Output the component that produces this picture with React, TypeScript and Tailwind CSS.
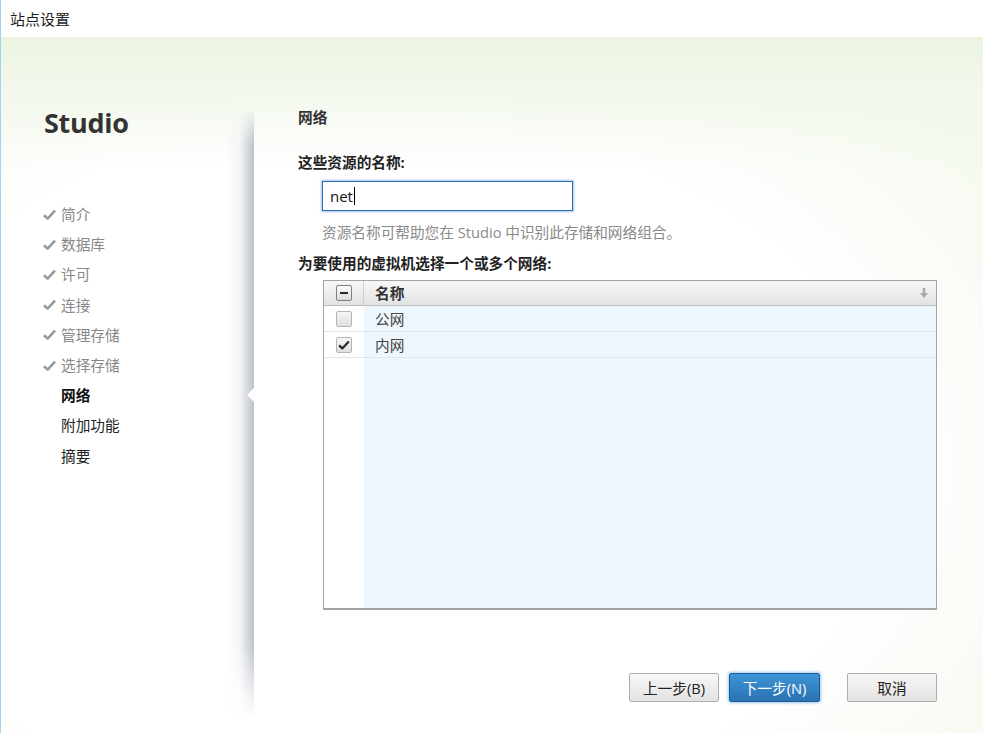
import React from "react";

const Check = ({ className = "" }: { className?: string }) => (
  <svg width="13" height="11" viewBox="0 0 13 11" className={className}>
    <path d="M1 6.2 L4.6 9.6 L12 1.6" fill="none" stroke="currentColor" strokeWidth="2.6" strokeLinejoin="round" />
  </svg>
);

const navDone = ["简介", "数据库", "许可", "连接", "管理存储", "选择存储"];

function Box({ state }: { state: "none" | "checked" | "mixed" }) {
  return (
    <div
      className={
        "w-[16px] h-[16px] rounded-[2px] border flex items-center justify-center " +
        (state === "mixed"
          ? "border-[#7e7e7e] bg-gradient-to-b from-[#fdfdfd] to-[#dcdcdc]"
          : "border-[#b4b4b4] bg-gradient-to-b from-[#f6f6f6] to-[#dedede]")
      }
    >
      {state === "mixed" && <div className="w-[8px] h-[2px] bg-[#2a2a2a]" />}
      {state === "checked" && (
        <svg width="12" height="10" viewBox="0 0 12 10">
          <path d="M1.2 5.4 L4.3 8.4 L10.8 1.4" fill="none" stroke="#2b2b2b" strokeWidth="2.2" strokeLinejoin="round" />
        </svg>
      )}
    </div>
  );
}

export default function App() {
  return (
    <div className="w-[983px] h-[733px] overflow-hidden flex flex-col border-l border-[#a6d2f0] font-['Open_Sans','Noto_Sans_CJK_SC',sans-serif] text-[#222]">
      <div className="h-[37px] shrink-0 bg-white flex items-center pl-[9px] text-[15px] leading-[20px] text-[#1e1e1e]">
        站点设置
      </div>
      <div className="flex-1 flex bg-[linear-gradient(180deg,#ebf4e0_0px,#f2f8ec_50px,#ffffff00_130px),radial-gradient(ellipse_95%_90%_at_38%_62%,#ffffff_55%,#eef6e5_100%)]">
        {/* sidebar */}
        <div className="relative w-[253px] shrink-0">
          <div className="absolute right-0 top-[71px] bottom-[16px] w-[28px] bg-gradient-to-r from-[#ffffff00] via-[#e9ebef80] to-[#bcc0ca] [mask-image:linear-gradient(to_bottom,transparent,black_6%,black_88%,transparent)]" />
          <div className="absolute right-0 top-[351px] w-0 h-0 border-y-[7px] border-y-transparent border-r-[7px] border-r-white" />
          <div className="pl-[43px] pt-[70px] text-[27px] leading-[32px] font-bold text-[#333] tracking-[-0.3px]">
            Studio
          </div>
          <div className="pl-[42px] mt-[60px] flex flex-col text-[14.67px]">
            {navDone.map((t) => (
              <div key={t} className="h-[30.2px] flex items-center text-[#888]">
                <Check className="text-[#999] mr-[5px]" />
                <span>{t}</span>
              </div>
            ))}
            <div className="h-[30.2px] flex items-center pl-[18px] font-bold text-[#111]">网络</div>
            <div className="h-[30.2px] flex items-center pl-[18px] text-[#222]">附加功能</div>
            <div className="h-[30.2px] flex items-center pl-[18px] text-[#222]">摘要</div>
          </div>
        </div>
        {/* main */}
        <div className="flex-1 flex flex-col pl-[44px] pr-[46px] pt-[70px] text-[14.67px]">
          <div className="leading-[20px] font-bold text-[#333]">网络</div>
          <div className="mt-[25px] leading-[20px] font-bold text-[#222]">这些资源的名称:</div>
          <div className="mt-[9px] ml-[24px] w-[251px] h-[30px] border border-[#2e6db0] shadow-[0_0_2px_1px_#a8c8e8] bg-white flex items-center pl-[7px] text-[15px] text-[#111]">
            net<span className="inline-block w-px h-[18px] bg-black ml-[1px]" />
          </div>
          <div className="mt-[11px] ml-[24px] leading-[20px] text-[#8a8a8a]">
            资源名称可帮助您在 Studio 中识别此存储和网络组合。
          </div>
          <div className="mt-[11px] leading-[20px] font-bold text-[#222]">为要使用的虚拟机选择一个或多个网络:</div>
          <div className="mt-[7px] ml-[25px] w-[614px] h-[330px] border border-[#a4a4a4] border-b-2 bg-white flex flex-col">
            <div className="h-[25px] shrink-0 flex bg-gradient-to-b from-[#f8f8f8] to-[#e2e2e2] border-b border-[#bdbdbd]">
              <div className="w-[40px] flex items-center justify-center border-r border-[#cfcfcf]">
                <Box state="mixed" />
              </div>
              <div className="flex-1 flex items-center pl-[11px] pr-[8px] font-bold text-[#333]">
                <span className="flex-1">名称</span>
                <svg width="8" height="10" viewBox="0 0 8 10">
                  <path d="M2.8 0 H5.2 V5 H8 L4 10 L0 5 H2.8 Z" fill="#a8a8a8" />
                </svg>
              </div>
            </div>
            {[
              { t: "公网", s: "none" as const },
              { t: "内网", s: "checked" as const },
            ].map((r) => (
              <div key={r.t} className="h-[26px] shrink-0 flex border-b border-[#dce6ee]">
                <div className="w-[40px] flex items-center justify-center bg-white">
                  <Box state={r.s} />
                </div>
                <div className="flex-1 flex items-center pl-[11px] bg-[#eef6fe] text-[#444]">{r.t}</div>
              </div>
            ))}
            <div className="flex-1 flex">
              <div className="w-[40px] bg-white" />
              <div className="flex-1 bg-[#eef6fe]" />
            </div>
          </div>
          <div className="mt-[63px] flex justify-end">
            <button className="w-[90px] h-[29px] rounded-[2px] border border-[#adadad] bg-gradient-to-b from-[#f7f7f7] to-[#e3e3e3] text-[#222] flex items-center justify-center">
              上一步(B)
            </button>
            <button className="ml-[10px] w-[91px] h-[29px] rounded-[2px] border border-[#1c5d98] bg-gradient-to-b from-[#3f95d6] to-[#2a72b3] text-white shadow-[0_0_3px_1px_#9cc7ec] flex items-center justify-center">
              下一步(N)
            </button>
            <button className="ml-[27px] w-[90px] h-[29px] rounded-[2px] border border-[#adadad] bg-gradient-to-b from-[#f7f7f7] to-[#e3e3e3] text-[#222] flex items-center justify-center">
              取消
            </button>
          </div>
        </div>
      </div>
    </div>
  );
}
